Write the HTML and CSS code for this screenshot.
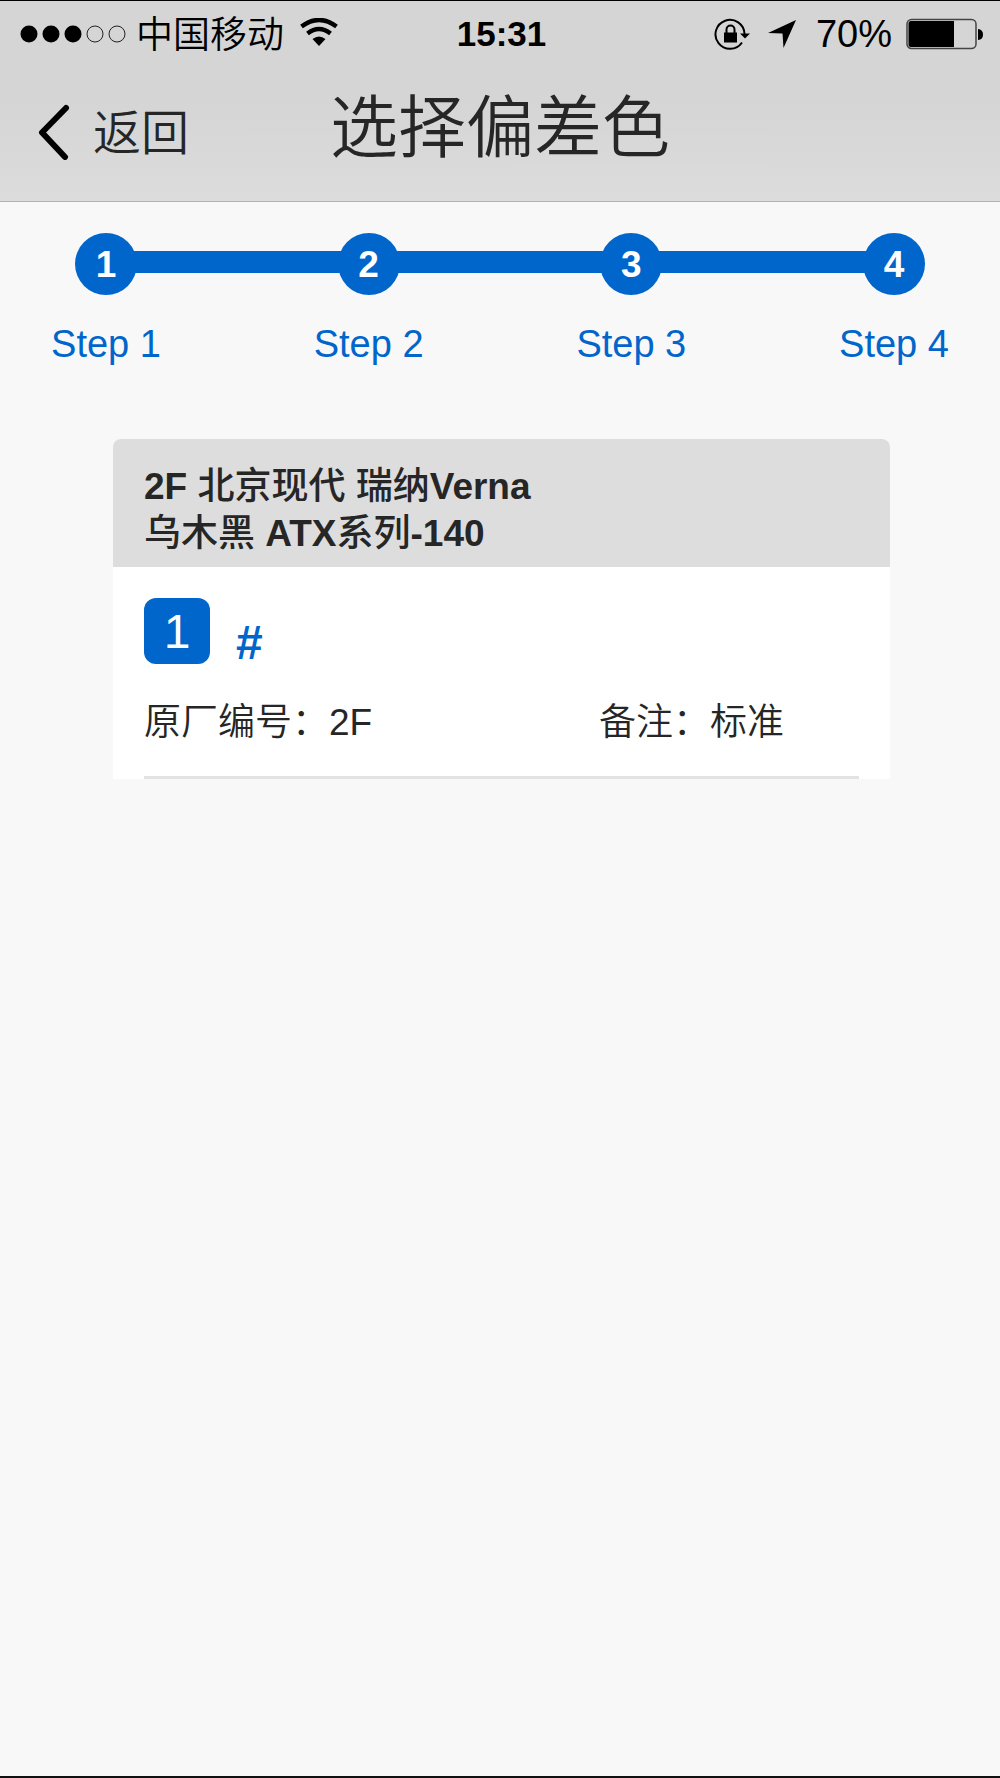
FILE: index.html
```html
<!DOCTYPE html>
<html lang="zh-CN">
<head>
<meta charset="utf-8">
<meta name="viewport" content="width=device-width, initial-scale=1">
<title>选择偏差色</title>
<link rel="stylesheet" href="styles.css">
</head>
<body>
<header class="top">
  <div class="status">
    <div class="status-left">
      <svg class="icon" width="106" height="18" viewBox="0 0 106 18" aria-hidden="true">
        <circle cx="9" cy="9" r="8.5"/><circle cx="31" cy="9" r="8.5"/><circle cx="53" cy="9" r="8.5"/>
        <g fill="none" stroke="#222"><circle cx="75" cy="9" r="8"/><circle cx="97" cy="9" r="8"/></g>
      </svg>
      <span class="carrier">中国移动</span>
      <svg class="icon wifi" width="38" height="28" viewBox="0 0 38 28" aria-hidden="true">
        <path d="M1.5 8.500Q19-4.500 36.500 8.500" fill="none" stroke="#000" stroke-width="4.500"/>
        <path d="M7.500 15.500Q19 6.500 30.500 15.500" fill="none" stroke="#000" stroke-width="4.500"/>
        <path d="M12.500 21Q19 16 25.500 21L19 28Z"/>
      </svg>
    </div>
    <time class="clock">15:31</time>
    <div class="status-right">
      <svg class="icon" width="36" height="32" viewBox="0 0 36 32" aria-hidden="true">
        <path d="M30.500 16A14.500 14.500 0 1 0 28 24.500" fill="none" stroke="#000" stroke-width="2"/>
        <path d="M26 15.500H36L31 20.500Z"/>
        <rect x="10" y="14.500" width="13" height="10"/>
        <path d="M12.500 15V11.500a4 4 0 0 1 8 0V15" fill="none" stroke="#000" stroke-width="2"/>
      </svg>
      <svg class="icon" width="28" height="28" viewBox="0 0 28 28" aria-hidden="true">
        <path d="M28 0 0 13 14.500 13.500 15.500 28Z"/>
      </svg>
      <div class="power">
        <span>70%</span>
        <svg class="icon" width="77" height="32" viewBox="0 0 77 32" aria-hidden="true">
          <rect x="1" y="1.500" width="69" height="29" rx="4.500" fill="none" stroke="#444" stroke-width="1.500"/>
          <path d="M5 3H48V29H5a2.500 2.500 0 0 1-2.500-2.500V5.500A2.500 2.500 0 0 1 5 3Z"/>
          <path d="M72 11q5 .5 5 5.500t-5 5.500Z"/>
        </svg>
      </div>
    </div>
  </div>
  <nav class="bar">
    <button class="back" type="button">
      <svg class="icon" width="32" height="56" viewBox="0 0 32 56" aria-hidden="true">
        <path d="M28 4 4 28.500 27 53" fill="none" stroke="#000" stroke-width="6" stroke-linecap="round" stroke-linejoin="round"/>
      </svg>
      <span class="back-label">返回</span>
    </button>
    <h1 class="title">选择偏差色</h1>
  </nav>
</header>
<main>
  <ol class="steps">
    <li class="step"><span class="dot">1</span><span>Step 1</span></li>
    <li class="step"><span class="dot">2</span><span>Step 2</span></li>
    <li class="step"><span class="dot">3</span><span>Step 3</span></li>
    <li class="step"><span class="dot">4</span><span>Step 4</span></li>
  </ol>
  <section class="card">
    <h2 class="card-head"><b>2F</b> 北京现代 瑞纳<b>Verna</b><br>乌木黑 <b>ATX</b>系列<b>-140</b></h2>
    <div class="card-body">
      <div class="variant">
        <span class="badge">1</span>
        <strong class="hash">#</strong>
      </div>
      <div class="facts">
        <span>原厂编号：2F</span>
        <span>备注：标准</span>
      </div>
    </div>
  </section>
</main>
</body>
</html>
```
FILE: styles.css
```css
* {
  box-sizing: border-box;
}

body {
  margin: 0;
  min-height: 100vh;
  border-top: 1px solid #000;
  border-bottom: 2px solid #111;
  background: #f8f8f8;
  color: #262626;
  font-family: "Liberation Sans", "Noto Sans CJK SC", sans-serif;
  font-size: 37px;
  font-weight: 350;
}

.icon {
  display: block;
  flex: none;
}

.top {
  background: linear-gradient(#d5d5d5 50%, #dcdcdc);
  border-bottom: 1px solid #b2b2b2;
}

.status {
  display: grid;
  grid-template-columns: 1fr auto 1fr;
  align-items: center;
  height: 65px;
  padding: 0 17px 0 20px;
  color: #000;
  line-height: 48px;
}

.status-left,
.status-right,
.power {
  display: flex;
  align-items: center;
}

.carrier {
  margin: 0 16px 0 10px;
  padding-top: 4px;
}

.wifi {
  margin-bottom: 4px;
}

.status-right {
  justify-content: flex-end;
  gap: 18px;
}

.power {
  gap: 14px;
  margin-left: 2px;
  font-size: 38px;
}

.clock {
  font-size: 35px;
  font-weight: 700;
}

.bar {
  display: grid;
  grid-template-columns: 1fr auto 1fr;
  align-items: start;
  height: 135px;
  padding: 22px 38px 0;
}

.back {
  display: flex;
  align-items: center;
  gap: 23px;
  justify-self: start;
  margin: 0;
  padding: 6px 0;
  border: 0;
  background: none;
  color: inherit;
  font: inherit;
  font-size: 48px;
  line-height: 72px;
}

.back-label {
  padding-top: 4px;
}

.title {
  margin: 0;
  font-size: 68px;
  font-weight: 350;
  line-height: 80px;
}

.steps {
  display: flex;
  justify-content: space-between;
  margin: 0;
  padding: 31px 44px 0;
  background: linear-gradient(#06c, #06c) no-repeat center 49px / calc(100% - 212px) 22px;
  list-style: none;
}

.step {
  display: flex;
  flex-direction: column;
  align-items: center;
  gap: 25px;
  width: 124px;
  color: #06c;
  font-size: 38px;
  line-height: 48px;
  white-space: nowrap;
}

.dot {
  width: 62px;
  height: 62px;
  border-radius: 50%;
  background: #06c;
  color: #fff;
  font-size: 37px;
  font-weight: 700;
  line-height: 64px;
  text-align: center;
}

.card {
  margin: 71px 11% 0 113px;
  border-radius: 8px 8px 0 0;
  background: #fff;
  overflow: hidden;
}

.card-head {
  margin: 0;
  padding: 24px 31px 10px;
  background: #ddd;
  font-size: 37px;
  font-weight: 500;
  line-height: 47px;
}

.card-head b {
  font-weight: 700;
}

.card-body {
  margin: 0 31px;
  padding: 31px 0 27px;
  border-bottom: 3px solid #e2e2e4;
}

.variant {
  display: flex;
  align-items: flex-end;
  gap: 26px;
  color: #06c;
}

.badge {
  width: 66px;
  height: 66px;
  border-radius: 12px;
  background: #06c;
  color: #fff;
  font-size: 48px;
  line-height: 68px;
  text-align: center;
}

.hash {
  font-size: 48px;
  font-weight: 700;
  line-height: 42px;
}

.facts {
  display: grid;
  grid-template-columns: 7fr 4fr;
  margin-top: 33px;
  line-height: 52px;
}
```
